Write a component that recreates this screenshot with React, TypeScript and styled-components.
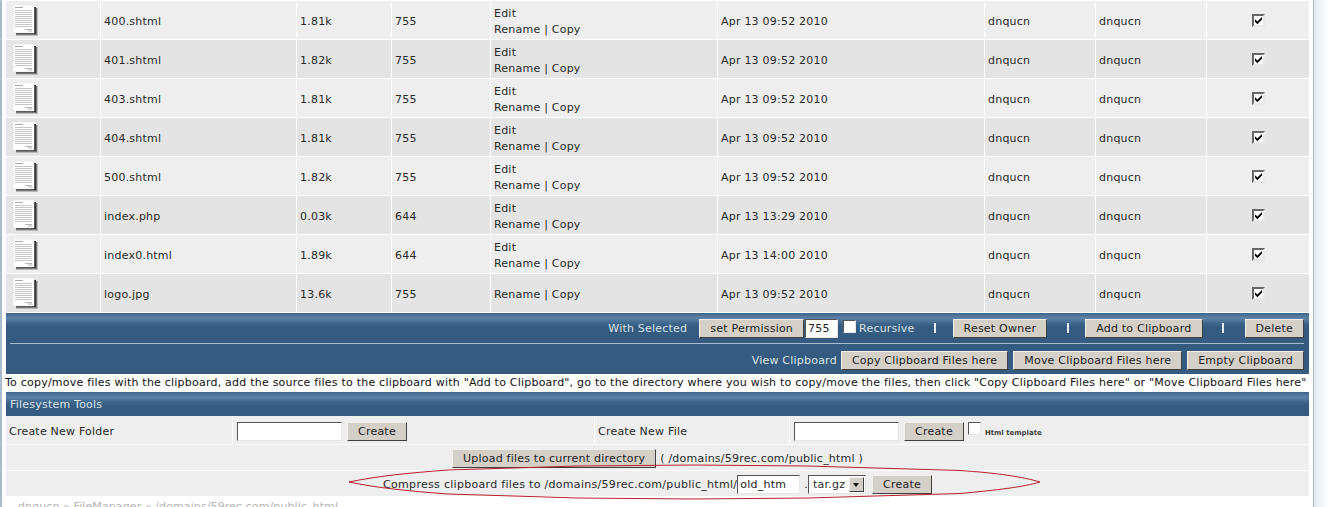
import React from 'react';
import styled, { createGlobalStyle } from 'styled-components';

type FileType = {
  name: string
  size: string
  perm: string
  date: string
  editable?: boolean
}

const files: FileType[] = [
  { name: '400.shtml', size: '1.81k', perm: '755', date: 'Apr 13 09:52 2010', editable: true },
  { name: '401.shtml', size: '1.82k', perm: '755', date: 'Apr 13 09:52 2010', editable: true },
  { name: '403.shtml', size: '1.81k', perm: '755', date: 'Apr 13 09:52 2010', editable: true },
  { name: '404.shtml', size: '1.81k', perm: '755', date: 'Apr 13 09:52 2010', editable: true },
  { name: '500.shtml', size: '1.82k', perm: '755', date: 'Apr 13 09:52 2010', editable: true },
  { name: 'index.php', size: '0.03k', perm: '644', date: 'Apr 13 13:29 2010', editable: true },
  { name: 'index0.html', size: '1.89k', perm: '644', date: 'Apr 13 14:00 2010', editable: true },
  { name: 'logo.jpg', size: '13.6k', perm: '755', date: 'Apr 13 09:52 2010' },
];

const DocIcon = () => (
  <svg width="30" height="33" viewBox="0 0 30 33">
    <rect x="7" y="3" width="22" height="28" fill="#bbb" />
    <rect x="7" y="3" width="21" height="27" fill="#777" />
    <rect x="7" y="2" width="20" height="27" fill="#333" />
    <rect x="4" y="0" width="21" height="28" fill="#fff" stroke="#dcdcdc" strokeWidth="0.5" />
    <path d="M6 2.5h8" stroke="#aaa" strokeWidth="1" />
    <path d="M6 5.5h17M6 7.5h17M6 9.5h17M6 11.5h17M6 13.5h17M6 15.5h17M6 17.5h17M6 19.5h17M6 21.5h17" stroke="#c6c6c6" strokeWidth="1" />
    <path d="M16 24.5h7M19 26h4" stroke="#b5b5b5" strokeWidth="1" />
  </svg>
);

const CheckMark = () => (
  <svg width="9" height="9" viewBox="0 0 9 9">
    <path d="M1 3.2 3.4 5.6 8 1v2.6L3.4 8.2 1 5.8z" fill="#000" />
  </svg>
);

export default function App() {
  return (
    <>
      <GlobalStyle />
      <Page>
        <Panel>
          <FileList>
            {files.map((file, index) => (
              <FileRow key={file.name} $even={index % 2 === 1}>
                <IconCell><DocIcon /></IconCell>
                <Cell>{file.name}</Cell>
                <Cell>{file.size}</Cell>
                <Cell>{file.perm}</Cell>
                <ActionCell>
                  {file.editable && <span>Edit</span>}
                  <span>Rename | Copy</span>
                </ActionCell>
                <Cell>{file.date}</Cell>
                <Cell>dnqucn</Cell>
                <Cell>dnqucn</Cell>
                <CheckCell><CheckBox $checked><CheckMark /></CheckBox></CheckCell>
              </FileRow>
            ))}
          </FileList>

          <ActionBar>
            <BarRow>
              <BarLabel>With Selected</BarLabel>
              <Button $ml={12}>set Permission</Button>
              <PermInput defaultValue="755" />
              <BarCheck />
              <BarLabel>Recursive</BarLabel>
              <BarSep $left={19} $right={17} />
              <Button>Reset Owner</Button>
              <BarSep $left={20} $right={16} />
              <Button>Add to Clipboard</Button>
              <BarSep $left={19} $right={21} />
              <Button>Delete</Button>
            </BarRow>
            <BarRule />
            <ClipboardRow>
              <BarLabel>View Clipboard</BarLabel>
              <Button $ml={4}>Copy Clipboard Files here</Button>
              <Button $ml={5}>Move Clipboard Files here</Button>
              <Button $ml={5}>Empty Clipboard</Button>
            </ClipboardRow>
          </ActionBar>

          <HelpText>
            To copy/move files with the clipboard, add the source files to the clipboard with "Add to Clipboard", go to the directory where you wish to copy/move the files, then click "Copy Clipboard Files here" or "Move Clipboard Files here"
          </HelpText>

          <SectionHeader>Filesystem Tools</SectionHeader>

          <CreateRow>
            <CreateLabel>Create New Folder</CreateLabel>
            <CreateField>
              <TextInput />
              <Button $ml={5}>Create</Button>
            </CreateField>
            <CreateLabel>Create New File</CreateLabel>
            <CreateField>
              <TextInput />
              <Button $ml={5}>Create</Button>
              <TemplateCheck />
              <TinyLabel>Html template</TinyLabel>
            </CreateField>
          </CreateRow>

          <CenterRow>
            <Button>Upload files to current directory</Button>
            <PathText>( /domains/59rec.com/public_html )</PathText>
          </CenterRow>

          <CenterRow>
            <CompressText>Compress clipboard files to /domains/59rec.com/public_html/</CompressText>
            <NameInput defaultValue="old_htm" />
            <Dot>.</Dot>
            <FakeSelect>
              <span>tar.gz</span>
              <SelectArrow />
            </FakeSelect>
            <Button $ml={6}>Create</Button>
            <Circle viewBox="0 0 694 36" width="694" height="36">
              <path
                d="M1 18 C30 12 60 9 100 6 L230 2 L345 1 L460 2 L612 6.5 C650 9 675 13 692 18 C675 23 650 26 612 29.5 L460 34 L345 35 L230 34 L100 30 C60 27 30 24 1 18Z"
                fill="none"
                stroke="#b8202c"
                strokeWidth="1"
              />
            </Circle>
          </CenterRow>

          <Crumbs>dnqucn » FileManager » /domains/59rec.com/public_html</Crumbs>
        </Panel>
        <SideFade />
      </Page>
    </>
  );
}

const GlobalStyle = createGlobalStyle`
  html, body {
    margin: 0;
    height: 507px;
    overflow: hidden;
    background: #fff;
  }
`

const Page = styled.div`
  display: flex;
  width: 1335px;
  height: 507px;
  overflow: hidden;
  font-family: "DejaVu Sans", Verdana, sans-serif;
  font-size: 11px;
  letter-spacing: 0.22px;
  color: #2a2a2a;
`
const Panel = styled.div`
  width: 1314px;
  box-sizing: border-box;
  padding: 1px 4px 0 4px;
  border-left: 2px solid #a9bccd;
  border-right: 1px solid #a9bccd;
  flex-shrink: 0;
`
const SideFade = styled.div`
  flex: 1;
  background: linear-gradient(to right, #e4ebf1, #ffffff 70%);
`
const FileList = styled.div`
  display: flex;
  flex-direction: column;
  gap: 1px;
`
const FileRow = styled.div<{ $even?: boolean }>`
  display: grid;
  grid-template-columns: 95px 196px 95px 99px 227px 267px 111px 111px 102px;
  height: 38px;
  background: ${props => (props.$even ? '#e4e4e4' : '#eeeeee')};
`
const Cell = styled.div`
  display: flex;
  align-items: center;
  padding: 3px 0 0 3px;
  box-sizing: border-box;
  border-right: 1px solid #fff;
  white-space: nowrap;
`
const IconCell = styled(Cell)`
  padding: 4px 0 0 3px;
  align-items: flex-start;
`
const ActionCell = styled(Cell)`
  flex-direction: column;
  align-items: flex-start;
  justify-content: center;
  line-height: 16px;
`
const CheckCell = styled.div`
  display: flex;
  justify-content: center;
  padding: 13px 0 0 0;
`
const CheckBox = styled.span<{ $checked?: boolean }>`
  display: inline-flex;
  align-items: center;
  justify-content: center;
  width: 9px;
  height: 9px;
  background: #fff;
  border: 2px solid;
  border-color: #666 #e8e8e8 #e8e8e8 #666;
`
const ActionBar = styled.div`
  height: 61px;
  margin-top: 1px;
  box-sizing: border-box;
  padding: 0 5px 0 4px;
  color: #d9e2ea;
  background: linear-gradient(to bottom, #3d6489 0, #5f82a6 5px, #3f678c 10px, #355c80 14px, #355c80 100%);
`
const BarRow = styled.div`
  display: flex;
  align-items: center;
  justify-content: flex-end;
  height: 30px;
  box-sizing: border-box;
`
const ClipboardRow = styled(BarRow)`
  padding-top: 2px;
`
const BarRule = styled.div`
  height: 1px;
  background: #a9bccd;
`
const BarLabel = styled.span`
  white-space: nowrap;
`
const BarSep = styled.span<{ $left: number; $right: number }>`
  width: 2px;
  height: 10px;
  margin: 0 ${props => props.$right}px 0 ${props => props.$left}px;
  background: #e8eef4;
`
const Button = styled.button<{ $ml?: number }>`
  height: 19px;
  padding: 0 10px;
  margin: 0 0 0 ${props => props.$ml || 0}px;
  font: inherit;
  letter-spacing: inherit;
  color: #222;
  white-space: nowrap;
  background: #d4d0c8;
  border: 1px solid;
  border-color: #f2f0ec #404040 #404040 #f2f0ec;
  border-radius: 0;
`
const TextInput = styled.input`
  width: 105px;
  height: 19px;
  box-sizing: border-box;
  padding: 0 2px;
  margin: 0;
  font: inherit;
  letter-spacing: inherit;
  color: #222;
  background: #fff;
  border: 1px solid;
  border-color: #555 #e6e6e6 #e6e6e6 #555;
  border-radius: 0;
  outline: none;
`
const PermInput = styled(TextInput)`
  width: 33px;
  margin-left: 1px;
`
const NameInput = styled(TextInput)`
  width: 63px;
`
const EmptyCheck = styled.span`
  display: inline-block;
  width: 13px;
  height: 13px;
  box-sizing: border-box;
  background: #fff;
  border: 1px solid;
  border-color: #555 #e6e6e6 #e6e6e6 #555;
`
const BarCheck = styled(EmptyCheck)`
  margin: -4px 3px 0 5px;
`
const TemplateCheck = styled(EmptyCheck)`
  margin: -5px 4px 0 4px;
`
const TinyLabel = styled.span`
  margin-top: 3px;
  font-size: 7px;
  font-weight: bold;
  color: #444;
  letter-spacing: 0;
  white-space: nowrap;
`
const HelpText = styled.div`
  height: 18px;
  line-height: 18px;
  margin-left: -1px;
  white-space: nowrap;
  color: #111;
`
const SectionHeader = styled.div`
  height: 24px;
  line-height: 25px;
  box-sizing: border-box;
  padding-left: 4px;
  color: #d9e2ea;
  background: linear-gradient(to bottom, #3d6489 0, #5f82a6 5px, #3f678c 10px, #355c80 14px, #355c80 100%);
`
const CreateRow = styled.div`
  display: grid;
  grid-template-columns: 227px 362px 195px 1fr;
  height: 28px;
  background: #eeeeee;
`
const CreateLabel = styled.div`
  display: flex;
  align-items: center;
  padding: 2px 0 0 3px;
  border-right: 1px solid #fff;
`
const CreateField = styled.div`
  display: flex;
  align-items: center;
  padding: 2px 0 0 4px;
  border-right: 1px solid #fff;
  &:last-child {
    border-right: 0;
  }
`
const CenterRow = styled.div`
  position: relative;
  display: flex;
  align-items: center;
  justify-content: center;
  height: 25px;
  box-sizing: border-box;
  padding-top: 1px;
  margin-top: 1px;
  white-space: nowrap;
  background: #eeeeee;
`
const CompressText = styled.span`
  letter-spacing: 0.3px;
`
const PathText = styled.span`
  margin-left: 4px;
`
const Dot = styled.span`
  margin-left: 4px;
`
const FakeSelect = styled.div`
  display: flex;
  align-items: center;
  justify-content: space-between;
  width: 58px;
  height: 19px;
  box-sizing: border-box;
  padding: 0 1px 0 4px;
  background: #fff;
  border: 1px solid;
  border-color: #555 #e6e6e6 #e6e6e6 #555;
`
const SelectArrow = styled.span`
  position: relative;
  width: 15px;
  height: 15px;
  box-sizing: border-box;
  background: #d4d0c8;
  border: 1px solid;
  border-color: #f2f0ec #404040 #404040 #f2f0ec;
  &::after {
    content: '';
    position: absolute;
    left: 3px;
    top: 5px;
    border-left: 3px solid transparent;
    border-right: 3px solid transparent;
    border-top: 4px solid #111;
  }
`
const Circle = styled.svg`
  position: absolute;
  left: 342px;
  top: -7px;
  pointer-events: none;
`
const Crumbs = styled.div`
  margin: 4px 0 0 12px;
  height: 14px;
  line-height: 14px;
  letter-spacing: 0.1px;
  color: #b5b5b5;
  white-space: nowrap;
`
